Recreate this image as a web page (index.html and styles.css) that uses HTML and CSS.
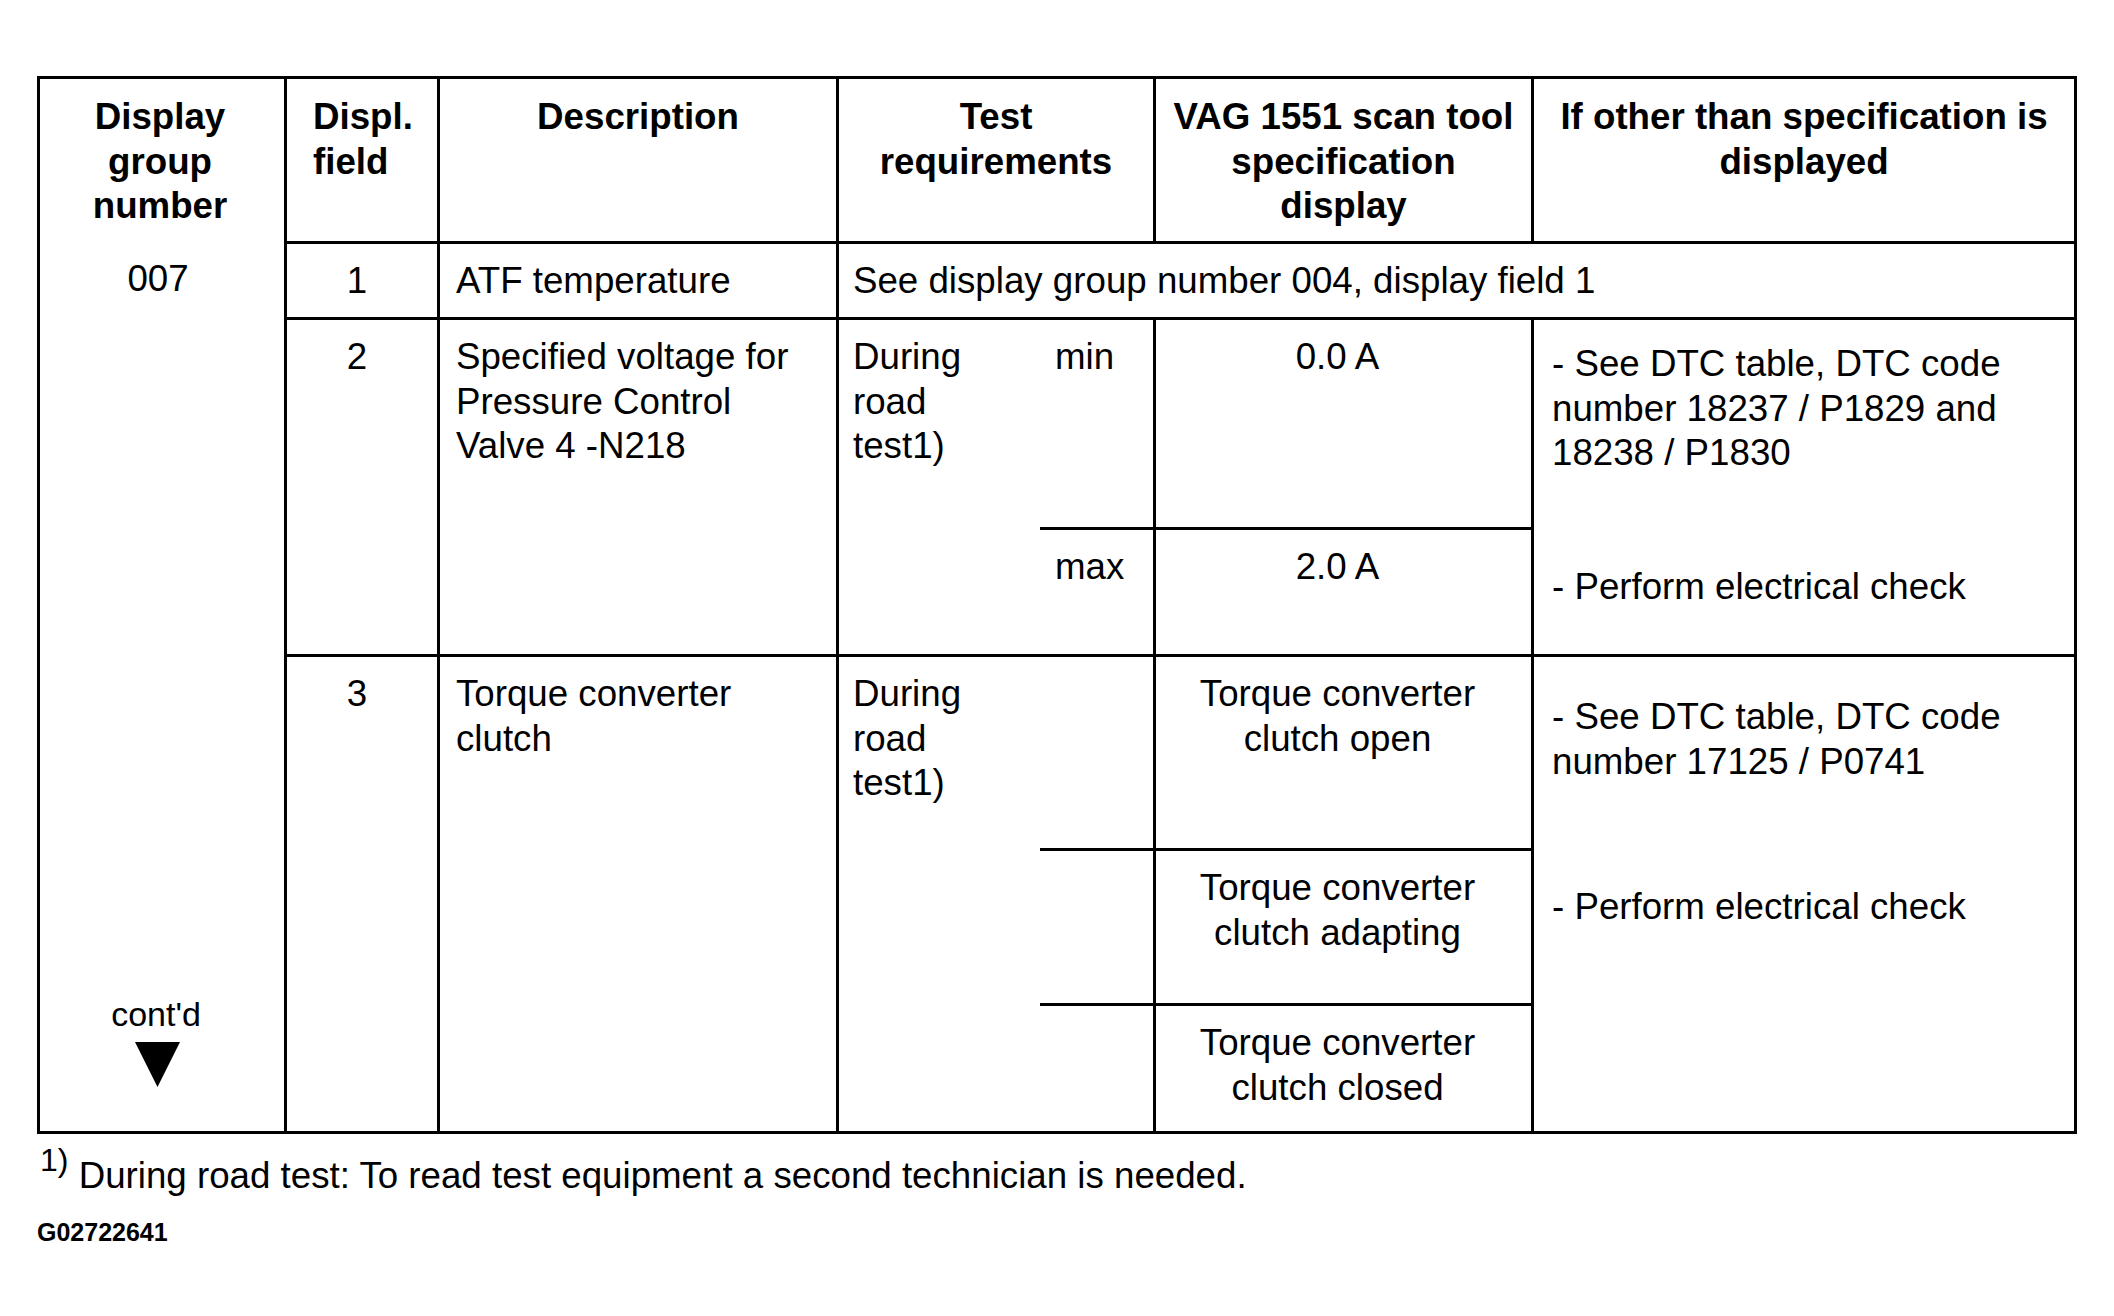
FILE: index.html
```html
<!DOCTYPE html>
<html lang="en">
<head>
<meta charset="utf-8">
<title>Display group 007</title>
<link rel="stylesheet" href="styles.css">
</head>
<body>
<div class="page">
  <div class="grid">
    <div class="cell grp-col col1 rall nb">
      <div class="bold">Display<br>group<br>number</div>
      <div class="grp-num">007</div>
      <div class="contd">
        <div class="contd-text">cont'd</div>
        <svg class="arrow" width="45" height="45" viewBox="0 0 45 45"><polygon points="0,0 45,0 22.5,45" fill="#000"/></svg>
      </div>
    </div>

    <div class="cell head head-left col2 r1">Displ.<br>field</div>
    <div class="cell head col3 r1">Description</div>
    <div class="cell head span-tr r1">Test<br>requirements</div>
    <div class="cell head col6 r1">VAG 1551 scan tool<br>specification<br>display</div>
    <div class="cell head col7 r1 nr">If other than specification is<br>displayed</div>

    <div class="cell num col2 r2">1</div>
    <div class="cell col3 r2">ATF temperature</div>
    <div class="cell test span-see r2 nr">See display group number 004, display field 1</div>

    <div class="cell num col2 r34">2</div>
    <div class="cell col3 r34">Specified voltage for<br>Pressure Control<br>Valve 4 -N218</div>
    <div class="cell test col4 r34 nr">During<br>road<br>test1)</div>
    <div class="cell lim col5 r3">min</div>
    <div class="cell lim col5 r4">max</div>
    <div class="cell spec col6 r3">0.0 A</div>
    <div class="cell spec col6 r4">2.0 A</div>
    <div class="cell action action-a col7 r34 nr">
      <p>- See DTC table, DTC code<br>number 18237 / P1829 and<br>18238 / P1830</p>
      <p class="gap-a">- Perform electrical check</p>
    </div>

    <div class="cell num col2 r57 nb">3</div>
    <div class="cell col3 r57 nb">Torque converter<br>clutch</div>
    <div class="cell test col4 r57 nr nb">During<br>road<br>test1)</div>
    <div class="cell lim col5 r5"></div>
    <div class="cell lim col5 r6"></div>
    <div class="cell lim col5 r7 nb"></div>
    <div class="cell spec col6 r5">Torque converter<br>clutch open</div>
    <div class="cell spec col6 r6">Torque converter<br>clutch adapting</div>
    <div class="cell spec col6 r7 nb">Torque converter<br>clutch closed</div>
    <div class="cell action action-b col7 r57 nr nb">
      <p>- See DTC table, DTC code<br>number 17125 / P0741</p>
      <p class="gap-b">- Perform electrical check</p>
    </div>
  </div>

  <p class="footnote"><span class="sup">1)</span> During road test: To read test equipment a second technician is needed.</p>
  <p class="code">G02722641</p>
</div>
</body>
</html>
```

FILE: styles.css
```css
* {
  box-sizing: border-box;
}

html,
body {
  margin: 0;
  background: #fff;
}

body {
  font-family: "Liberation Sans", Arial, sans-serif;
  font-size: 36.7px;
  line-height: 44.5px;
  color: #000;
}

p {
  margin: 0;
}

.page {
  padding: 76px 0 0 37px;
}

.grid {
  display: grid;
  width: 2040px;
  grid-template-columns: 247px 153px 399px 201px 116px 378px 540px;
  grid-template-rows: 165px 76px 210px 127px 194px 155px 125px;
  border: 3px solid #000;
}

.cell {
  border-right: 3px solid #000;
  border-bottom: 3px solid #000;
  padding: 15px 16px 0;
  white-space: nowrap;
}

.nr {
  border-right: none;
}

.nb {
  border-bottom: none;
}

/* grid placement */
.col1 { grid-column: 1; }
.col2 { grid-column: 2; }
.col3 { grid-column: 3; }
.col4 { grid-column: 4; }
.col5 { grid-column: 5; }
.col6 { grid-column: 6; }
.col7 { grid-column: 7; }
.span-tr { grid-column: 4 / 6; }
.span-see { grid-column: 4 / 8; }

.r1 { grid-row: 1; }
.r2 { grid-row: 2; }
.r3 { grid-row: 3; }
.r4 { grid-row: 4; }
.r5 { grid-row: 5; }
.r6 { grid-row: 6; }
.r7 { grid-row: 7; }
.r34 { grid-row: 3 / 5; }
.r57 { grid-row: 5 / 8; }
.rall { grid-row: 1 / 8; }

/* first column */
.grp-col {
  display: flex;
  flex-direction: column;
  align-items: center;
  text-align: center;
  padding: 16px 4px 44px 0;
}

.bold {
  font-weight: bold;
}

.grp-num {
  margin-top: 28px;
  padding-right: 4px;
}

.contd {
  margin-top: auto;
  display: flex;
  flex-direction: column;
  align-items: center;
  padding-right: 8px;
}

.contd-text {
  font-size: 34px;
}

.arrow {
  display: block;
  margin-top: 6px;
  margin-left: 4px;
}

/* header row */
.head {
  font-weight: bold;
  text-align: center;
  padding-top: 16px;
}

.head-left {
  text-align: left;
  padding-left: 26px;
}

/* body cells */
.num {
  text-align: center;
  padding-left: 0;
  padding-right: 10px;
}

.test {
  padding-left: 14px;
}

.lim {
  padding-left: 15px;
}

.spec {
  text-align: center;
  padding: 15px 20px 0 8px;
}

.action {
  padding-left: 18px;
}

.action-a {
  padding-top: 22px;
}

.action-b {
  padding-top: 38px;
}

.gap-a {
  margin-top: 89px;
}

.gap-b {
  margin-top: 101px;
}

/* footnote */
.footnote {
  margin-top: 20px;
  padding-left: 3px;
  white-space: nowrap;
}

.sup {
  font-size: 32px;
  line-height: 0;
  vertical-align: 17px;
}

.code {
  margin-top: 19px;
  font-size: 25px;
  line-height: 28px;
  font-weight: bold;
}
```
